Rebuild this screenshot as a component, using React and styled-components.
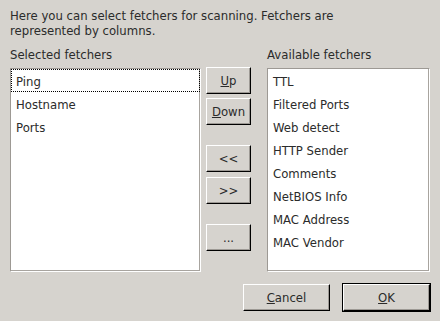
import React from "react";
import styled, { createGlobalStyle } from "styled-components";

const GlobalStyle = createGlobalStyle`
  html, body {
    margin: 0;
    padding: 0;
    background: #d6d3ce;
  }
  body {
    font-family: "DejaVu Sans", "Liberation Sans", sans-serif;
    font-size: 11.7px;
    color: #2b2b2b;
  }
`;

const selected = ["Ping", "Hostname", "Ports"];
const available = [
  "TTL",
  "Filtered Ports",
  "Web detect",
  "HTTP Sender",
  "Comments",
  "NetBIOS Info",
  "MAC Address",
  "MAC Vendor",
];

const App = () => {
  return (
    <>
      <GlobalStyle />
      <Dialog>
        <Intro>
          Here you can select fetchers for scanning. Fetchers are
          <br />
          represented by columns.
        </Intro>
        <Columns>
          <Label>Selected fetchers</Label>
          <span />
          <Label>Available fetchers</Label>
          <List $width={191}>
            {selected.map((name, i) => (
              <Item key={name} $focused={i === 0}>
                {name}
              </Item>
            ))}
          </List>
          <ButtonColumn>
            <SideButton>
              <u>U</u>p
            </SideButton>
            <SideButton $gap={4}>
              <u>D</u>own
            </SideButton>
            <SideButton $gap={20}>&lt;&lt;</SideButton>
            <SideButton $gap={5}>&gt;&gt;</SideButton>
            <SideButton $gap={20}>...</SideButton>
          </ButtonColumn>
          <List $width={163}>
            {available.map((name) => (
              <Item key={name}>{name}</Item>
            ))}
          </List>
        </Columns>
        <Footer>
          <DialogButton>
            <u>C</u>ancel
          </DialogButton>
          <DialogButton $default>
            <u>O</u>K
          </DialogButton>
        </Footer>
      </Dialog>
    </>
  );
};

export default App;

const Dialog = styled.div`
  width: 440px;
  height: 321px;
  box-sizing: border-box;
  padding: 9px 10px 0 10px;
`;

const Intro = styled.p`
  margin: 0;
  line-height: 15px;
`;

const Columns = styled.div`
  display: grid;
  grid-template-columns: 196px 61px 163px;
  grid-template-rows: 15px 204px;
  row-gap: 5px;
  margin-top: 9px;
`;

const Label = styled.div`
  line-height: 15px;
  white-space: nowrap;
`;

const List = styled.div`
  box-sizing: border-box;
  width: ${({ $width }) => $width}px;
  height: 204px;
  background: #fff;
  border: 1px solid;
  border-color: #9d9994 #fff #fff #9d9994;
  box-shadow: inset -1px -1px 0 #a8a49f;
  overflow: hidden;
`;

const Item = styled.div`
  box-sizing: border-box;
  height: 23px;
  padding: 2px 0 0 4px;
  line-height: 21px;
  border: 1px dotted ${({ $focused }) => ($focused ? "#000" : "transparent")};
`;

const ButtonColumn = styled.div`
  display: flex;
  flex-direction: column;
  margin-top: -1px;
`;

const SideButton = styled.button`
  box-sizing: border-box;
  width: 45px;
  height: 27px;
  margin-top: ${({ $gap }) => $gap || 0}px;
  padding: 0;
  font: inherit;
  color: inherit;
  background: #d6d3ce;
  border: 1px solid;
  border-color: #fff #000 #000 #fff;
  box-shadow: inset -1px -1px 0 #9d9994;
`;

const Footer = styled.div`
  display: flex;
  justify-content: flex-end;
  gap: 13px;
  margin-top: 12px;
`;

const DialogButton = styled.button`
  box-sizing: border-box;
  width: 87px;
  height: 27px;
  padding: 0;
  font: inherit;
  color: inherit;
  background: #d6d3ce;
  border: 1px solid;
  border-color: #fff #000 #000 #fff;
  box-shadow: ${({ $default }) =>
    $default
      ? "0 0 0 1px #000, inset -1px -1px 0 #9d9994"
      : "inset -1px -1px 0 #9d9994"};
`;
